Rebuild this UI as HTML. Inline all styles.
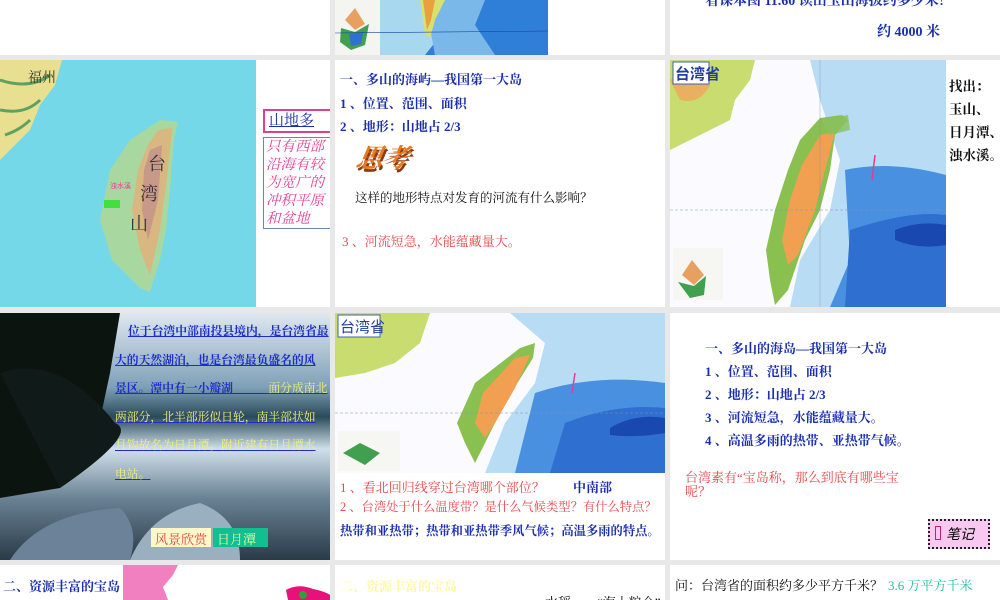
<!DOCTYPE html>
<html><head><meta charset="utf-8"><style>
body{margin:0;width:1000px;height:600px;background:#e8e8e8;position:relative;overflow:hidden;font-family:"Liberation Serif","Noto Serif CJK SC",serif}
.s{position:absolute;background:#fff;overflow:hidden}
.a{position:absolute;white-space:nowrap}
.b{color:#1a2fb0;font-weight:bold;font-size:13px}
.r{color:#e8484a;font-size:12.5px}
svg{position:absolute}
.y{color:#f0f080;font-weight:normal}
</style></head><body>

<!-- Row 1 -->
<div class="s" style="left:0;top:0;width:330px;height:55px"></div>
<div class="s" style="left:335px;top:0;width:330px;height:55px">
 <svg width="213" height="55" style="left:0;top:0">
  <rect width="213" height="55" fill="#2f7fd8"/>
  <path d="M0 0H120L110 30 90 55H0Z" fill="#a8d8f0"/>
  <path d="M90 0H150L140 25 160 55H100Z" fill="#7ab8ea"/>
  <path d="M85 0H110L100 20 95 38 90 34Z" fill="#d8e070"/>
  <path d="M88 0H100L96 20 92 30Z" fill="#e8a040"/>
  <rect x="0" y="0" width="45" height="55" fill="#f4f4f0"/>
  <path d="M10 20L20 8 30 24 20 30Z" fill="#e8a060"/>
  <path d="M6 28L20 32 34 24 30 45 16 50 5 42Z" fill="#40a050"/>
  <path d="M14 34L28 32 26 44 16 46Z" fill="#3070d0"/>
  <line x1="0" y1="33" x2="213" y2="31" stroke="#1040a0" stroke-width=".6"/>
 </svg>
</div>
<div class="s" style="left:670px;top:0;width:330px;height:55px">
 <div class="a b" style="left:35px;top:-10px;font-size:14px">看课本图 11.60 读出玉山海拔约多少米？</div>
 <div class="a b" style="left:207px;top:21px;font-size:14px">约 4000 米</div>
</div>

<!-- Row 2 -->
<div class="s" style="left:0;top:60px;width:330px;height:247px">
 <svg width="256" height="247" style="left:0;top:0">
  <rect width="256" height="247" fill="#74d8e8"/>
  <path d="M0 0H62L55 25 40 45 30 70 15 85 0 100Z" fill="#e8e090"/>
  <path d="M0 20Q30 30 50 15M0 50Q25 55 40 40M5 75Q20 70 30 60" stroke="#60a060" fill="none" stroke-width="3"/>
  <path d="M160 60L178 62 174 80 170 130 166 170 160 200 150 232 140 228 112 200 100 160 110 110 130 80Z" fill="#a8d8a0"/>
  <path d="M158 70L172 68 168 110 160 170 150 215 140 190 132 150 138 110 148 85Z" fill="#d8b880"/>
  <path d="M150 90L162 85 158 140 148 180 142 150 144 110Z" fill="#c89888"/>
  <text x="148" y="110" font-size="18" fill="#333" font-family="Noto Serif CJK SC">台</text>
  <text x="140" y="140" font-size="18" fill="#333" font-family="Noto Serif CJK SC">湾</text>
  <text x="130" y="170" font-size="18" fill="#333" font-family="Noto Serif CJK SC">山</text>
  <text x="110" y="128" font-size="7" fill="#e0409a" font-family="Noto Sans CJK SC">浊水溪</text>
  <rect x="104" y="140" width="16" height="8" fill="#40e040"/>
  <text x="28" y="22" font-size="14" fill="#333" font-family="Noto Serif CJK SC">福州</text>
 </svg>
 <div class="a" style="left:263px;top:49px;width:62px;height:20px;border:2px solid #e04090;color:#1a2fb0;font-size:15px;text-decoration:underline;padding-left:4px;line-height:20px">山地多</div>
 <div class="a" style="left:263px;top:77px;width:65px;height:90px;border:1px solid #7080c0;color:#e8409a;font-style:italic;font-size:14.5px;line-height:18px;white-space:normal;padding-left:2px">只有西部沿海有较为宽广的冲积平原和盆地</div>
</div>

<div class="s" style="left:335px;top:60px;width:330px;height:247px">
 <div class="a b" style="left:5px;top:9px">一、多山的海屿—我国第一大岛</div>
 <div class="a b" style="left:5px;top:33px">1 、位置、范围、面积</div>
 <div class="a b" style="left:5px;top:56px">2 、地形：山地占 2/3</div>
 <div class="a" style="left:22px;top:78px;font-size:26px;font-weight:bold;font-style:italic;color:#e87820;text-shadow:2px 3px 0 #8a3a10;transform:skewX(-10deg)">思考</div>
 <div class="a" style="left:20px;top:128px;font-size:12.5px;color:#111">这样的地形特点对发育的河流有什么影响？</div>
 <div class="a r" style="left:7px;top:171px;font-size:13px">3 、河流短急，水能蕴藏量大。</div>
</div>

<div class="s" style="left:670px;top:60px;width:330px;height:247px">
 <svg width="276" height="247" style="left:0;top:0">
  <rect width="276" height="247" fill="#fbfbff"/>
  <path d="M140 0H276V247H120L130 200 160 150 170 100 150 40Z" fill="#b8dcf4"/>
  <path d="M175 110Q220 100 276 115V247H160L180 200Z" fill="#4a90e0"/>
  <path d="M180 170Q240 150 276 155V247H175Z" fill="#2f6fd0"/>
  <path d="M225 170Q250 160 276 165V185Q250 190 225 180Z" fill="#1848b0"/>
  <path d="M0 0H85L80 20 65 40 60 60 40 70 20 80 0 90Z" fill="#c8dc70"/>
  <path d="M0 20Q20 10 40 25 30 45 10 40Z" fill="#e8b060"/>
  <path d="M150 58L172 55 178 60 165 75 160 110 150 150 135 180 118 230 105 245 100 220 96 190 105 150 118 110 130 80Z" fill="#8ac050"/>
  <path d="M150 75L165 72 155 110 145 150 128 195 118 205 112 180 120 140 132 105Z" fill="#f0a050"/>
  <path d="M152 60L178 55 180 70 160 75Z" fill="#8ac060" opacity=".8"/>
  <rect x="3" y="2" width="36" height="22" fill="#fff" stroke="#4060b0"/>
  <text x="5" y="19" font-size="15" fill="#2040a0" font-family="Noto Sans CJK SC" font-weight="bold">台湾省</text>
  <rect x="3" y="188" width="50" height="52" fill="#f6f6f2"/>
  <path d="M12 215L22 200 34 215 24 225Z" fill="#e8a060"/>
  <path d="M8 222L24 226 36 216 34 235 20 238Z" fill="#40a050"/>
  <line x1="0" y1="150" x2="276" y2="150" stroke="#8090c0" stroke-width=".6" stroke-dasharray="3 2"/>
  <line x1="150" y1="0" x2="150" y2="247" stroke="#8090c0" stroke-width=".4"/>
  <line x1="205" y1="95" x2="202" y2="120" stroke="#e04090" stroke-width="1.5"/>
 </svg>
 <div class="a" style="left:279px;top:15px;font-size:13.5px;line-height:23px;color:#111;font-weight:bold">找出：<br>玉山、<br>日月潭、<br>浊水溪。</div>
</div>

<!-- Row 3 -->
<div class="s" style="left:0;top:313px;width:330px;height:247px;background:#3a5060">
 <svg width="330" height="247" style="left:0;top:0">
  <defs><linearGradient id="sk" x1="0" y1="0" x2="0" y2="1"><stop offset="0" stop-color="#dfe8f0"/><stop offset=".3" stop-color="#7fa0b8"/><stop offset=".42" stop-color="#2a4a5a"/><stop offset=".55" stop-color="#d0e0ea"/><stop offset=".75" stop-color="#6a8294"/><stop offset="1" stop-color="#2a3a48"/></linearGradient></defs>
  <rect width="330" height="247" fill="url(#sk)"/>
  <path d="M0 0H120L110 60 95 130 60 175 0 185Z" fill="#0c1410"/>
  <path d="M0 60Q60 40 115 110 140 120 60 175 0 185Z" fill="#101a18"/>
  <path d="M10 247Q40 200 120 195 140 215 130 247Z" fill="#6c8298"/>
  <path d="M130 247Q150 200 200 190 240 205 240 247Z" fill="#9ab0c0"/>
 </svg>
 <div class="a" style="left:115px;top:4px;font-size:11.8px;line-height:28.5px;font-weight:bold;color:#1d2ec8;text-decoration:underline"><span style="padding-left:13px">位于台湾中部南投县境内，是台湾省最</span><br>大的天然湖泊，也是台湾最负盛名的风<br>景区。潭中有一小瓣湖　　　<span class="y">面分成南北</span><br><span class="y">两部分，北半部形似日轮，南半部状如</span><br><span class="y">月钩故名为日月潭。附近建有日月潭水</span><br><span class="y">电站。</span></div>
 <div class="a" style="left:151px;top:215px;background:#fff8c8;color:#e84050;font-size:13px;padding:1px 4px;height:17px">风景欣赏</div>
 <div class="a" style="left:213px;top:215px;background:#10c090;color:#fff8a0;font-size:13px;padding:1px 4px;width:47px;height:17px">日月潭</div>
</div>

<div class="s" style="left:335px;top:313px;width:330px;height:247px">
 <svg width="330" height="160" style="left:0;top:0">
  <rect width="330" height="160" fill="#fbfbff"/>
  <path d="M175 0H330V160H150L170 110 200 70 210 30Z" fill="#b8dcf4"/>
  <path d="M200 80Q260 60 330 70V160H180Z" fill="#4a90e0"/>
  <path d="M230 110Q280 90 330 95V160H215Z" fill="#2f6fd0"/>
  <path d="M275 115Q300 100 330 105V120Q300 125 275 122Z" fill="#1848b0"/>
  <path d="M0 0H95L85 30 60 50 30 60 0 65Z" fill="#c8dc70"/>
  <path d="M185 35L200 30 198 45 170 90 150 130 140 150 130 130 122 110 140 70Z" fill="#8ac050"/>
  <path d="M180 45L195 42 180 75 160 110 150 125 140 110 148 80Z" fill="#f0a050"/>
  <rect x="3" y="2" width="42" height="22" fill="#fff" stroke="#4060b0"/>
  <text x="5" y="19" font-size="15" fill="#2040a0" font-family="Noto Sans CJK SC">台湾省</text>
  <rect x="3" y="118" width="62" height="40" fill="#f6f6f2"/>
  <path d="M8 140L25 130 45 140 30 152Z" fill="#40a050"/>
  <line x1="0" y1="100" x2="330" y2="100" stroke="#8090c0" stroke-width=".6" stroke-dasharray="3 2"/>
  <line x1="240" y1="60" x2="237" y2="80" stroke="#e04090" stroke-width="1.5"/>
 </svg>
 <div class="a r" style="left:5px;top:164px;font-size:13px">1 、看北回归线穿过台湾哪个部位？</div>
 <div class="a b" style="left:238px;top:164px">中南部</div>
 <div class="a r" style="left:5px;top:184px;font-size:12.3px">2 、台湾处于什么温度带？是什么气候类型？有什么特点？</div>
 <div class="a b" style="left:5px;top:208px;font-size:12.3px">热带和亚热带；热带和亚热带季风气候；高温多雨的特点。</div>
</div>

<div class="s" style="left:670px;top:313px;width:330px;height:247px">
 <div class="a b" style="left:35px;top:25px">一、多山的海岛—我国第一大岛</div>
 <div class="a b" style="left:35px;top:48px">1 、位置、范围、面积</div>
 <div class="a b" style="left:35px;top:71px">2 、地形：山地占 2/3</div>
 <div class="a b" style="left:35px;top:94px">3 、河流短急，水能蕴藏量大。</div>
 <div class="a b" style="left:35px;top:117px">4 、高温多雨的热带、亚热带气候。</div>
 <div class="a r" style="left:15px;top:158px;white-space:normal;width:240px;line-height:14px;font-size:13px">台湾素有“宝岛称，那么到底有哪些宝<br>呢？</div>
 <div class="a" style="left:258px;top:206px;width:58px;height:26px;border:2px dotted #222;background:#f8c8f0;font-style:italic;font-size:14px;line-height:26px;font-family:'Liberation Sans','Noto Sans CJK SC',sans-serif"><span style="display:inline-block;width:4px;height:12px;border:1px solid #c02070;margin:0 5px 0 5px;vertical-align:-1px"></span>笔记</div>
</div>

<!-- Row 4 -->
<div class="s" style="left:0;top:565px;width:330px;height:35px">
 <div class="a b" style="left:3px;top:11px">二、资源丰富的宝岛</div>
 <svg width="210" height="35" style="left:123px;top:0">
  <path d="M0 0H55L50 10 40 22 45 35H0Z" fill="#f080c0"/>
  <path d="M163 25Q175 18 190 24 210 28 210 35H165Z" fill="#e8107a"/>
  <circle cx="180" cy="30" r="4" fill="#30a030"/>
 </svg>
</div>
<div class="s" style="left:335px;top:565px;width:330px;height:35px">
 <div class="a" style="left:5px;top:11px;color:#fff8a0;font-weight:bold;font-size:13px">二、资源丰富的宝岛</div>
 <div class="a" style="left:210px;top:27px;font-size:13px;color:#111">水稻一，“海上粮仓”</div>
</div>
<div class="s" style="left:670px;top:565px;width:330px;height:35px">
 <div class="a" style="left:5px;top:10px;font-size:13px;color:#111">问：台湾省的面积约多少平方千米？</div>
 <div class="a" style="left:218px;top:10px;font-size:13px;color:#20c0a0">3.6 万平方千米</div>
</div>
</body></html>
